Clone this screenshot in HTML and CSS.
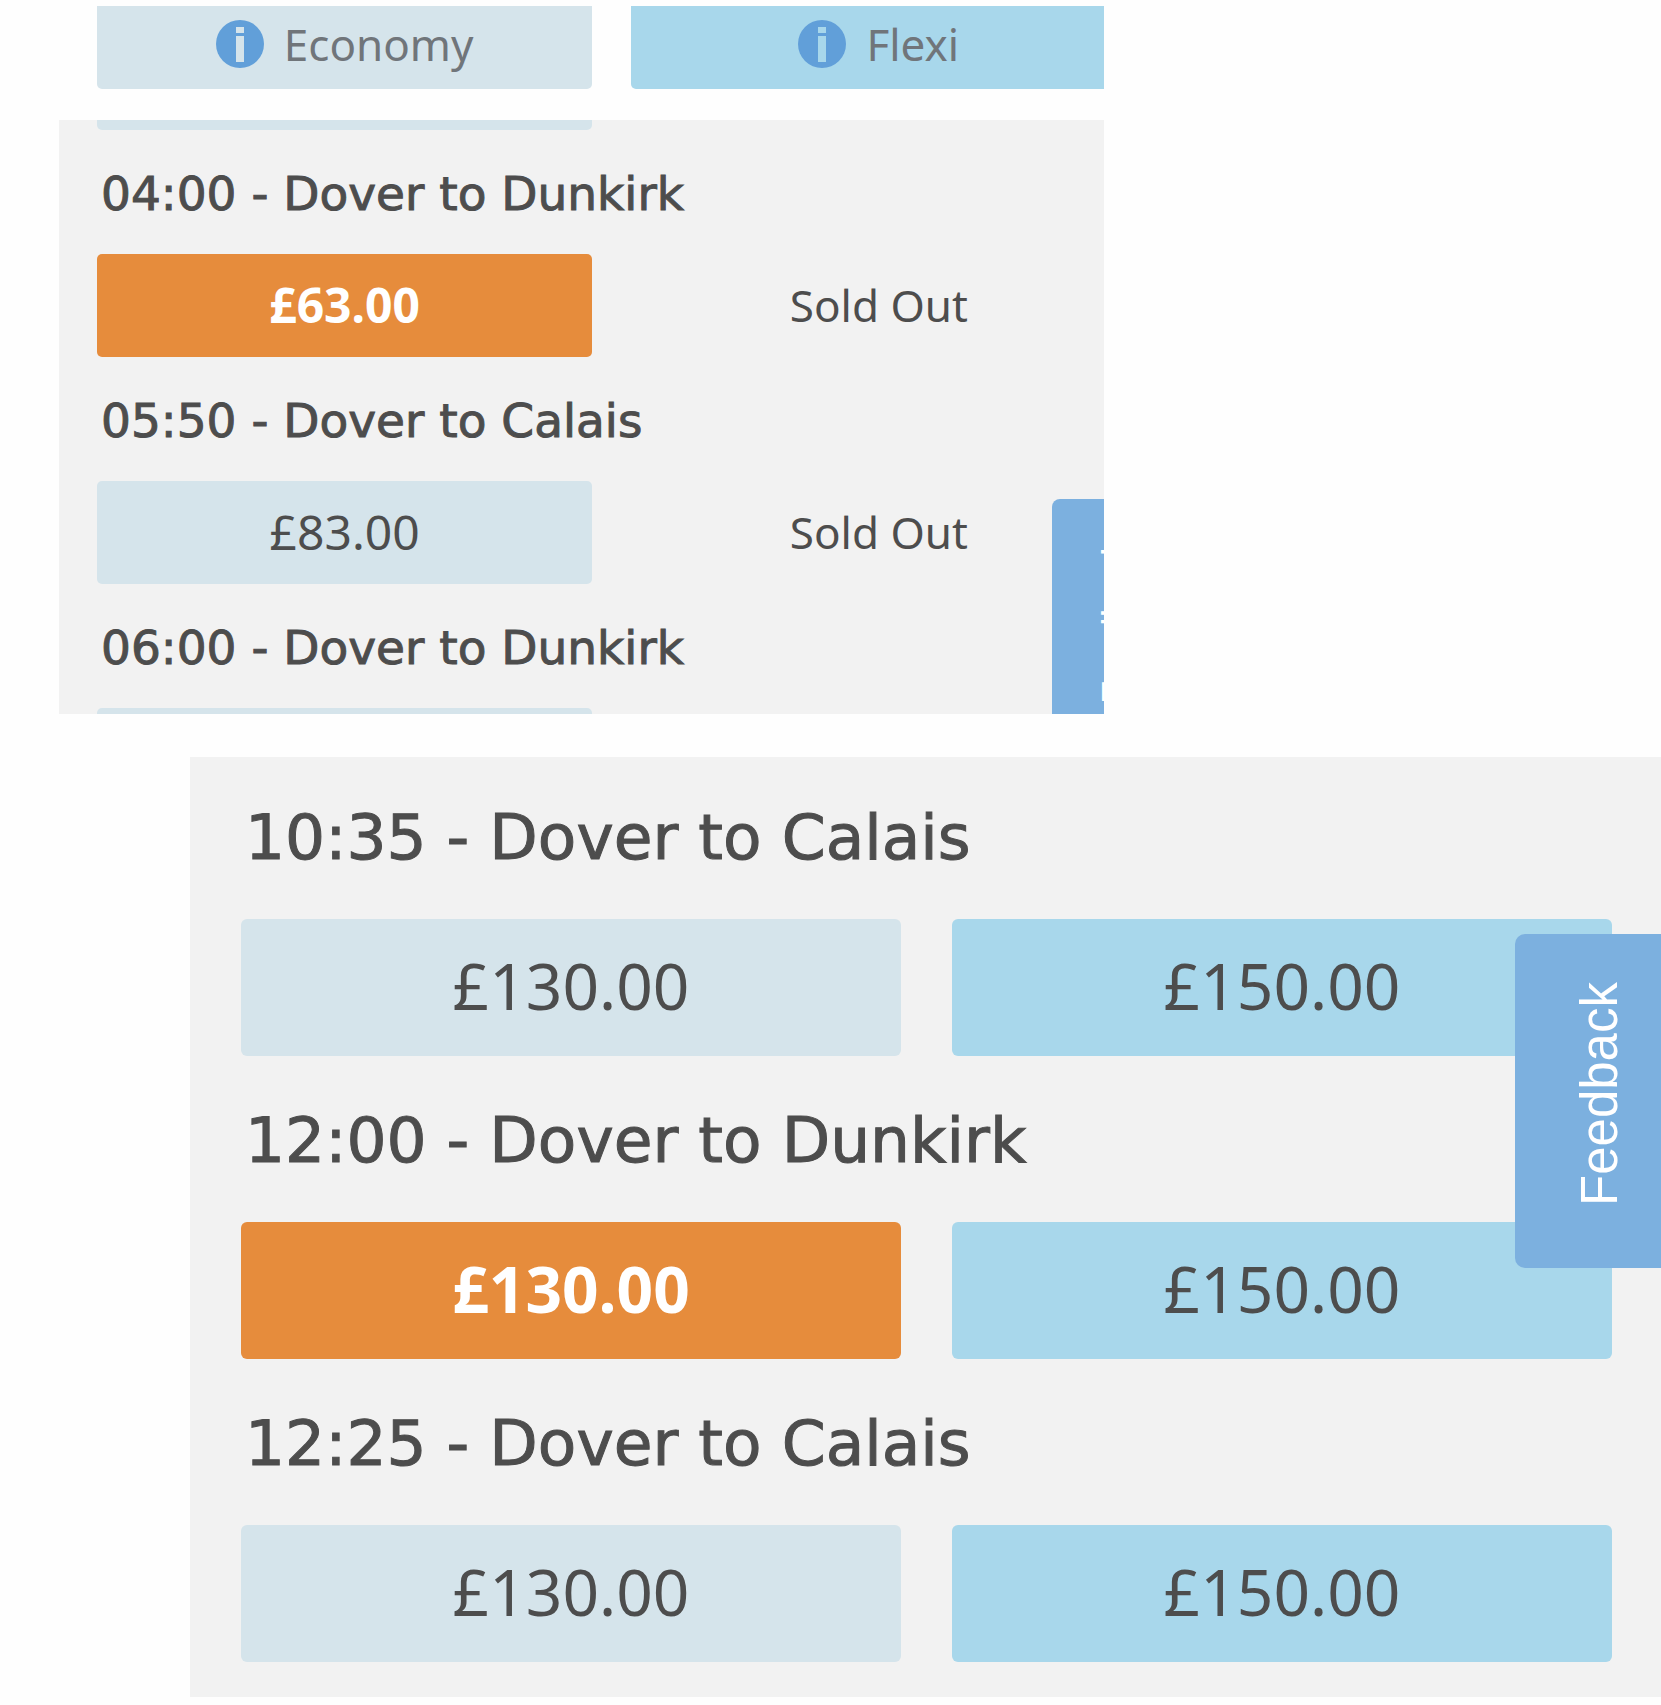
FILE: index.html
```html
<!DOCTYPE html>
<html lang="en">
<head>
<meta charset="utf-8">
<meta name="viewport" content="width=device-width, initial-scale=1">
<title>Dover ferry fares</title>
<link rel="stylesheet" href="styles.css">
</head>
<body>
<main class="page">
  <section class="board board-early">
    <header class="fare-header">
      <div class="fares">
        <div class="fare-type economy">
          <button type="button" class="info" aria-label="About Economy fares">
            <svg viewBox="0 0 48 48" aria-hidden="true"><circle cx="24" cy="24" r="24"/><path d="M20 7h8v6h-8zM20 16h8v26h-8z"/></svg>
          </button>
          <span>Economy</span>
        </div>
        <div class="fare-type flexi">
          <button type="button" class="info" aria-label="About Flexi fares">
            <svg viewBox="0 0 48 48" aria-hidden="true"><circle cx="24" cy="24" r="24"/><path d="M20 7h8v6h-8zM20 16h8v26h-8z"/></svg>
          </button>
          <span>Flexi</span>
        </div>
      </div>
    </header>
    <div class="panel">
      <div class="sailings">
        <div class="fares"><div class="peek peek-end"></div></div>
        <article class="sailing">
          <h2>04:00 - Dover to Dunkirk</h2>
          <div class="fares">
            <button type="button" class="fare selected" aria-pressed="true">£63.00</button>
            <p class="sold-out">Sold Out</p>
          </div>
        </article>
        <article class="sailing">
          <h2>05:50 - Dover to Calais</h2>
          <div class="fares">
            <button type="button" class="fare economy">£83.00</button>
            <p class="sold-out">Sold Out</p>
          </div>
        </article>
        <article class="sailing">
          <h2>06:00 - Dover to Dunkirk</h2>
          <div class="fares"><div class="peek peek-start"></div></div>
        </article>
      </div>
      <button type="button" class="feedback">Feedback</button>
    </div>
  </section>

  <section class="board board-midday">
    <div class="panel">
      <div class="sailings">
        <article class="sailing">
          <h2>10:35 - Dover to Calais</h2>
          <div class="fares">
            <button type="button" class="fare economy">£130.00</button>
            <button type="button" class="fare flexi">£150.00</button>
          </div>
        </article>
        <article class="sailing">
          <h2>12:00 - Dover to Dunkirk</h2>
          <div class="fares">
            <button type="button" class="fare selected" aria-pressed="true">£130.00</button>
            <button type="button" class="fare flexi">£150.00</button>
          </div>
        </article>
        <article class="sailing">
          <h2>12:25 - Dover to Calais</h2>
          <div class="fares">
            <button type="button" class="fare economy">£130.00</button>
            <button type="button" class="fare flexi">£150.00</button>
          </div>
        </article>
      </div>
      <button type="button" class="feedback">Feedback</button>
    </div>
  </section>
</main>
</body>
</html>
```
FILE: styles.css
```css
* {
  box-sizing: border-box;
}

body {
  margin: 0;
  background: #fefefe;
  color: #4d4d4d;
  font-family: "Noto Sans", "Open Sans", sans-serif;
}

h2,
p {
  margin: 0;
}

button {
  border: 0;
  padding: 0;
  color: inherit;
  font: inherit;
  cursor: pointer;
}

.page {
  display: flex;
  flex-direction: column;
  gap: 43px;
  padding: 6px 0 8px;
}

/* Each board sets its own scale */
.board-early {
  --text: 48px;
  --heading: 47px;
  --line: 56px;
  --space: 32px;
  --column-gap: 39px;
  --fare-height: 103px;
  --nudge: 2px;
  --radius: 5px;
  --indent: 4px;
  display: flex;
  flex-direction: column;
  gap: 31px;
  width: calc(63% - 1px);
  margin-left: 59px;
}

.board-midday {
  --text: 64px;
  --heading: 63px;
  --line: 76px;
  --space: 43px;
  --column-gap: 51px;
  --fare-height: 137px;
  --nudge: 4px;
  --radius: 6px;
  --indent: 4px;
  margin-left: 190px;
}

.board {
  font-size: var(--text);
  line-height: var(--line);
}

.fares {
  display: grid;
  grid-template-columns: 1fr 1fr;
  column-gap: var(--column-gap);
}

/* The early board is cropped at its right edge */
.fare-header,
.board-early .panel {
  overflow: hidden;
  padding-left: 38px;
}

.board-early .fares {
  margin-right: -22px;
}

.fare-type {
  display: flex;
  align-items: center;
  justify-content: center;
  gap: 20px;
  height: 83px;
  padding-bottom: 8px;
  border-radius: 0 0 5px 5px;
  color: #70757a;
  font-size: 44px;
}

.economy {
  background: #d5e4eb;
}

.flexi {
  background: #a8d7eb;
}

.info {
  width: 48px;
  height: 48px;
  background: none;
}

.info svg {
  display: block;
  fill: #619fd9;
}

.economy path {
  fill: #d5e4eb;
}

.flexi path {
  fill: #a8d7eb;
}

.panel {
  position: relative;
  background: #f2f2f2;
}

.board-midday .panel {
  padding: 39px 49px 35px 51px;
}

.sailings {
  display: flex;
  flex-direction: column;
  gap: var(--space);
}

.sailing h2 {
  margin-bottom: var(--space);
  padding-top: 4px;
  padding-left: var(--indent);
  font-family: "DejaVu Sans", Verdana, sans-serif;
  font-size: var(--heading);
  font-weight: 400;
  -webkit-text-stroke: 1px currentColor;
}

.fare,
.sold-out {
  display: flex;
  align-items: center;
  justify-content: center;
  height: var(--fare-height);
  padding-bottom: var(--nudge);
}

.fare {
  border-radius: var(--radius);
}

.sold-out {
  font-size: 44px;
}

.selected {
  background: #e68c3c;
  color: #fff;
  font-weight: 700;
}

.peek {
  background: #d5e4eb;
}

.peek-end {
  height: 10px;
  border-radius: 0 0 5px 5px;
}

.peek-start {
  height: 6px;
  border-radius: 5px 5px 0 0;
}

.feedback {
  position: absolute;
  background: #7cb0df;
  color: #fff;
  font-family: "Liberation Sans", Arial, sans-serif;
  writing-mode: sideways-lr;
  text-align: left;
}

.board-early .feedback {
  top: 379px;
  right: -58px;
  width: 110px;
  height: 251px;
  padding: 0 20px 46px 38px;
  border-radius: 8px 0 0 8px;
  font-size: 38px;
  line-height: 52px;
}

.board-midday .feedback {
  top: 177px;
  right: 0;
  width: 146px;
  height: 334px;
  padding: 0 26px 62px 50px;
  border-radius: 10px 0 0 10px;
  font-size: 51px;
  line-height: 70px;
}
```
